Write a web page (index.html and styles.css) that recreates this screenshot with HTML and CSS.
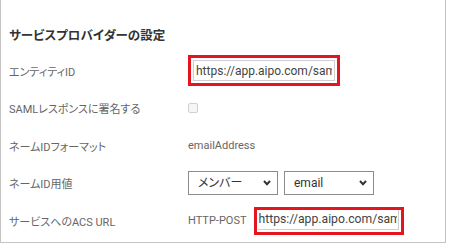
FILE: index.html
```html
<!DOCTYPE html>
<html>
<head>
    <title>SAML設定</title>
    <link rel="stylesheet" href="styles.css">
</head>
<body>
    <div class="panel">
        <h2 class="panel-title">サービスプロバイダーの設定</h2>
        <div class="form-row">
            <div class="form-label">エンティティID</div>
            <div class="form-value">
                <span class="mark">
                    <input type="text" class="text-input" value="https://app.aipo.com/saml/metadata">
                </span>
            </div>
        </div>
        <div class="form-row">
            <div class="form-label">SAMLレスポンスに署名する</div>
            <div class="form-value">
                <span class="checkbox"></span>
            </div>
        </div>
        <div class="form-row">
            <div class="form-label">ネームIDフォーマット</div>
            <div class="form-value">emailAddress</div>
        </div>
        <div class="form-row">
            <div class="form-label">ネームID用値</div>
            <div class="form-value">
                <span class="select-wrap">
                    <select class="select">
                        <option>メンバー</option>
                    </select>
                    <svg class="chevron" width="8" height="6" viewBox="0 0 8 6"><path d="M1 1 L4 4.2 L7 1" fill="none" stroke="#333" stroke-width="2"/></svg>
                </span>
                <span class="select-wrap">
                    <select class="select">
                        <option>email</option>
                    </select>
                    <svg class="chevron" width="8" height="6" viewBox="0 0 8 6"><path d="M1 1 L4 4.2 L7 1" fill="none" stroke="#333" stroke-width="2"/></svg>
                </span>
            </div>
        </div>
        <div class="form-row">
            <div class="form-label">サービスへのACS URL</div>
            <div class="form-value">
                <span class="binding">HTTP-POST</span>
                <span class="mark mark-cut">
                    <input type="text" class="text-input text-input-cut" value="https://app.aipo.com/saml/acs">
                </span>
            </div>
        </div>
    </div>
</body>
</html>
```

FILE: styles.css
```css
body {
    margin: 0;
    font-family: Roboto, "Noto Sans CJK JP", sans-serif;
    font-feature-settings: "palt";
    background-color: #fff;
}

.panel {
    width: 444px;
    border: 1px solid #c4c4c4;
    border-top: none;
    padding: 26px 0 2px 8px;
    box-sizing: content-box;
    width: 436px;
}

.panel-title {
    margin: 0 0 6px 0;
    height: 20px;
    line-height: 20px;
    font-size: 12.5px;
    font-weight: bold;
    color: #333;
}

.form-row {
    display: grid;
    grid-template-columns: 179px 1fr;
    align-items: center;
    height: 37.5px;
}

.form-label {
    font-size: 11px;
    color: #666;
}

.form-value {
    display: flex;
    align-items: center;
    gap: 6px;
    font-size: 11px;
    color: #666;
}

.mark {
    display: inline-flex;
    border: 3px solid #e3161f;
    padding: 2px;
}

.text-input {
    box-sizing: border-box;
    width: 142px;
    height: 21px;
    margin: 0;
    padding: 0 2px;
    border: 1px solid #cfcfcf;
    font-family: Roboto, sans-serif;
    font-size: 12px;
    color: #444;
    outline: none;
}

.mark-cut {
    padding: 0 2px 2px 1px;
}

.text-input-cut {
    width: 141px;
    height: 20px;
    padding: 0 1px;
    border-top: none;
    border-left: none;
    font-size: 12.2px;
}

.binding {
    margin-right: 1px;
}

.checkbox {
    display: inline-block;
    width: 8px;
    height: 8px;
    border: 1px solid #cfcfcf;
    border-radius: 2px;
    background-color: #f6f6f6;
}

.select-wrap {
    position: relative;
    display: inline-block;
}

.select {
    appearance: none;
    box-sizing: border-box;
    width: 90px;
    height: 24px;
    margin: 0;
    padding: 0 0 0 9px;
    border: 1px solid #8c8c8c;
    border-radius: 0;
    background-color: #fff;
    font-family: Roboto, "Noto Sans CJK JP", sans-serif;
    font-feature-settings: "palt";
    font-size: 12px;
    color: #333;
}

.chevron {
    position: absolute;
    right: 7px;
    top: 9px;
    pointer-events: none;
}
```
